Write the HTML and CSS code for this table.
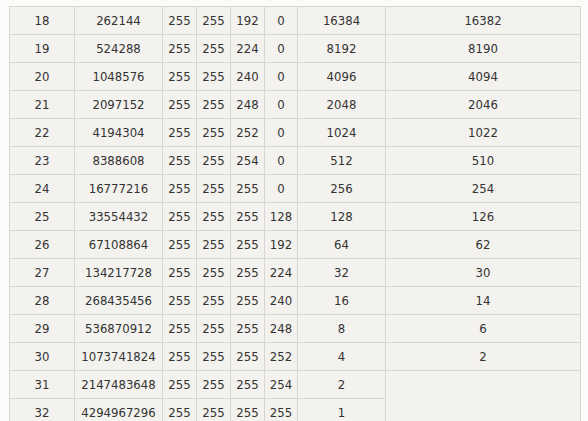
FILE: index.html
```html
<!DOCTYPE html>
<html>
<head>
<meta charset="utf-8">
<link rel="stylesheet" href="styles.css">
</head>
<body>
<table class="mask-table">
<colgroup>
<col class="c1"><col class="c2"><col class="c3"><col class="c3"><col class="c3"><col class="c4"><col class="c2"><col class="c7">
</colgroup>
<tbody>
<tr><td>18</td><td>262144</td><td>255</td><td>255</td><td>192</td><td>0</td><td>16384</td><td>16382</td></tr>
<tr><td>19</td><td>524288</td><td>255</td><td>255</td><td>224</td><td>0</td><td>8192</td><td>8190</td></tr>
<tr><td>20</td><td>1048576</td><td>255</td><td>255</td><td>240</td><td>0</td><td>4096</td><td>4094</td></tr>
<tr><td>21</td><td>2097152</td><td>255</td><td>255</td><td>248</td><td>0</td><td>2048</td><td>2046</td></tr>
<tr><td>22</td><td>4194304</td><td>255</td><td>255</td><td>252</td><td>0</td><td>1024</td><td>1022</td></tr>
<tr><td>23</td><td>8388608</td><td>255</td><td>255</td><td>254</td><td>0</td><td>512</td><td>510</td></tr>
<tr><td>24</td><td>16777216</td><td>255</td><td>255</td><td>255</td><td>0</td><td>256</td><td>254</td></tr>
<tr><td>25</td><td>33554432</td><td>255</td><td>255</td><td>255</td><td>128</td><td>128</td><td>126</td></tr>
<tr><td>26</td><td>67108864</td><td>255</td><td>255</td><td>255</td><td>192</td><td>64</td><td>62</td></tr>
<tr><td>27</td><td>134217728</td><td>255</td><td>255</td><td>255</td><td>224</td><td>32</td><td>30</td></tr>
<tr><td>28</td><td>268435456</td><td>255</td><td>255</td><td>255</td><td>240</td><td>16</td><td>14</td></tr>
<tr><td>29</td><td>536870912</td><td>255</td><td>255</td><td>255</td><td>248</td><td>8</td><td>6</td></tr>
<tr><td>30</td><td>1073741824</td><td>255</td><td>255</td><td>255</td><td>252</td><td>4</td><td>2</td></tr>
<tr><td>31</td><td>2147483648</td><td>255</td><td>255</td><td>255</td><td>254</td><td>2</td><td rowspan="2"></td></tr>
<tr><td>32</td><td>4294967296</td><td>255</td><td>255</td><td>255</td><td>255</td><td>1</td></tr>
</tbody>
</table>
</body>
</html>
```

FILE: styles.css
```css
html, body {
  margin: 0;
  padding: 0;
  background: #fbfbfa;
}
body {
  padding: 6px 0 0 9px;
  font-family: "DejaVu Sans Condensed", "Liberation Sans", sans-serif;
  font-size: 13px;
  color: #333333;
}
.mask-table {
  border-collapse: collapse;
  table-layout: fixed;
  width: 571px;
  background: #f4f2ee;
  border: 1px solid #d2d2d2;
}
.c1 { width: 65px; }
.c2 { width: 88px; }
.c3 { width: 34px; }
.c4 { width: 33px; }
.c7 { width: 195px; }
.mask-table tr {
  height: 28px;
}
.mask-table td {
  border: 1px solid #d6d6d4;
  padding: 0;
  text-align: center;
  vertical-align: middle;
  white-space: nowrap;
}
```
